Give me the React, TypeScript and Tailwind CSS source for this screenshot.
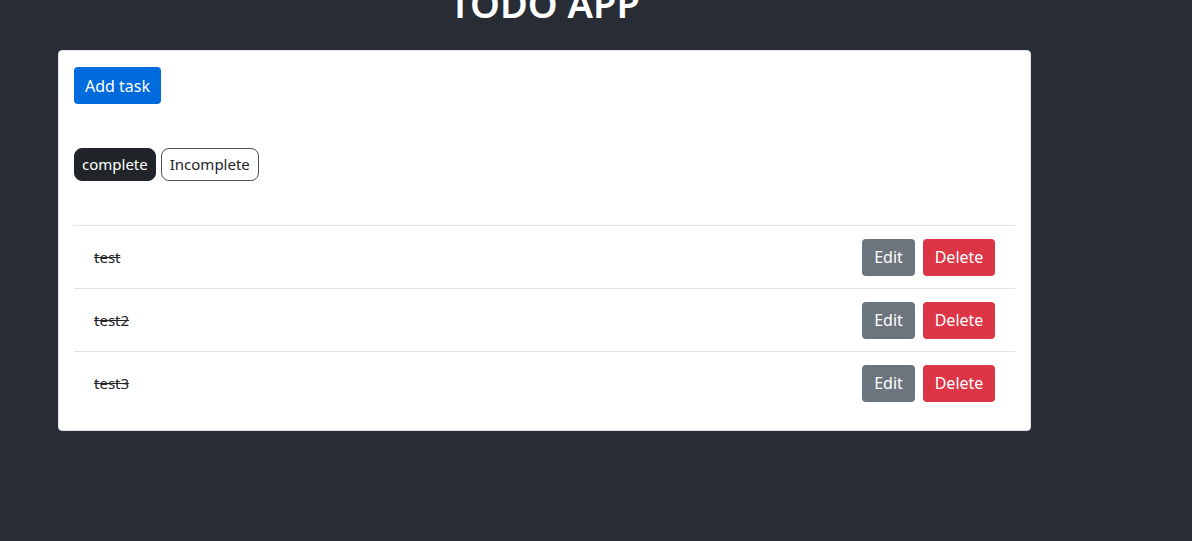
import { useState } from 'react';

interface Task {
  id: number;
  title: string;
  completed: boolean;
}

const initialTasks: Task[] = [
  { id: 1, title: 'test', completed: true },
  { id: 2, title: 'test2', completed: true },
  { id: 3, title: 'test3', completed: true },
];

export default function App() {
  const [tasks] = useState<Task[]>(initialTasks);
  const [filter, setFilter] = useState<'complete' | 'incomplete'>('complete');

  const shown = tasks.filter(t => (filter === 'complete' ? t.completed : !t.completed));

  return (
    <div className="min-h-[541px] bg-[#282c34] text-[#212529] overflow-hidden font-['Noto_Sans',sans-serif]">
      <div className="w-[973px] ml-[58px]">
        <h1 className="mt-[-21px] mb-[23px] text-center text-[38px] leading-[48px] font-semibold text-white">
          TODO APP
        </h1>

        <div className="bg-white rounded border border-[#dee2e6] px-[15px] pt-[16px] pb-[16px]">
          <button className="h-[37px] px-[11px] rounded-[4px] bg-[#006bdc] text-white text-base">
            Add task
          </button>

          <div className="flex gap-[5px] mt-[44px]">
            <button
              onClick={() => setFilter('complete')}
              className={`h-[33px] px-[7px] rounded-[8px] text-[15px] border ${
                filter === 'complete'
                  ? 'bg-[#212529] border-[#212529] text-white'
                  : 'bg-white border-[#495057] text-[#212529]'
              }`}
            >
              complete
            </button>
            <button
              onClick={() => setFilter('incomplete')}
              className={`h-[33px] px-[8px] rounded-[8px] text-[15px] border ${
                filter === 'incomplete'
                  ? 'bg-[#212529] border-[#212529] text-white'
                  : 'bg-white border-[#495057] text-[#212529]'
              }`}
            >
              Incomplete
            </button>
          </div>

          <ul className="mt-[44px]">
            {shown.map(task => (
              <li
                key={task.id}
                className="h-[63px] flex items-center justify-between px-5 border-t border-[#dee2e6]"
              >
                <span className={`text-[15px] ${task.completed ? 'line-through' : ''}`}>{task.title}</span>
                <div className="flex gap-2">
                  <button className="h-[37px] w-[53px] rounded-[4px] bg-[#6c757d] text-white text-base">
                    Edit
                  </button>
                  <button className="h-[37px] w-[72px] rounded-[4px] bg-[#dc3545] text-white text-base">
                    Delete
                  </button>
                </div>
              </li>
            ))}
          </ul>
        </div>
      </div>
    </div>
  );
}
